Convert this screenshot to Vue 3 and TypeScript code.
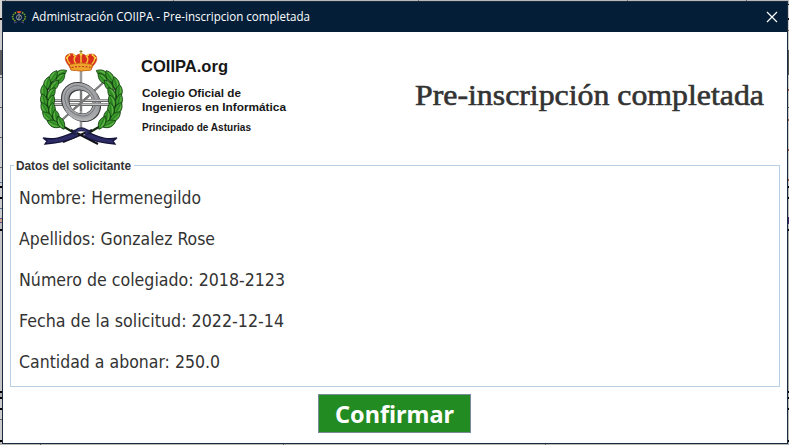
<script setup lang="ts">
interface Field {
  label: string
  value: string
  width: number
}

interface Leaf {
  x: number
  y: number
  angle: number
}

const fields: Field[] = [
  { label: 'Nombre', value: 'Hermenegildo', width: 182 },
  { label: 'Apellidos', value: 'Gonzalez Rose', width: 196 },
  { label: 'Número de colegiado', value: '2018-2123', width: 266 },
  { label: 'Fecha de la solicitud', value: '2022-12-14', width: 265 },
  { label: 'Cantidad a abonar', value: '250.0', width: 201 },
]

const leaves: Leaf[] = [
  { x: 30, y: 34, angle: 62 },
  { x: 23, y: 37, angle: 32 },
  { x: 30, y: 39, angle: 40 },
  { x: 17, y: 44, angle: 14 },
  { x: 24, y: 46, angle: 38 },
  { x: 14, y: 52, angle: -4 },
  { x: 21, y: 54, angle: 30 },
  { x: 14, y: 61, angle: -14 },
  { x: 21, y: 62, angle: 18 },
  { x: 15, y: 69, angle: -28 },
  { x: 22, y: 70, angle: 6 },
  { x: 18, y: 77, angle: -46 },
  { x: 26, y: 77, angle: -8 },
  { x: 24, y: 84, angle: -64 },
  { x: 31, y: 83, angle: -26 },
]
</script>

<template>
  <div class="desktop">
    <section class="window">
      <header class="titlebar">
        <svg class="app-icon" viewBox="0 0 14 14">
          <path d="M4 2.5C-.5 5-.5 9 4 11.5M10 2.5c4.500 2.500 4.500 6.500 0 9" fill="none" stroke="#84a52c" stroke-width="1.600" stroke-dasharray="1.500 .9" />
          <circle cx="7" cy="7.300" r="2.600" fill="none" stroke="#99979f" stroke-width=".9" />
          <path d="M7 3v8M5 10l4-5" stroke="#aaa" stroke-width=".6" />
          <path d="M4.500 1.300h5L8.500 3h-3z" fill="#e9532c" />
          <path d="m2 13 3-1M9 12l3 1" fill="none" stroke="#5b4185" />
        </svg>
        <svg class="window-title" width="284" height="22">
          <text x="0" y="15" textLength="278" lengthAdjust="spacingAndGlyphs">Administración COIIPA - Pre-inscripcion completada</text>
        </svg>
        <button class="close" aria-label="Cerrar">
          <svg width="12" height="12" viewBox="0 0 12 12"><path d="m1 1 10 10M11 1 1 11" stroke="#fff" stroke-width="1.15" /></svg>
        </button>
      </header>

      <div class="heading">
        <div class="brand">
          <svg class="crest" width="110" height="115" viewBox="0 0 110 115">
            <defs>
              <linearGradient id="steel" x1="0" y1="0" x2="1" y2="1">
                <stop offset="0" stop-color="#a4a6a8" />
                <stop offset=".45" stop-color="#8b8d90" />
                <stop offset="1" stop-color="#bcbec0" />
              </linearGradient>
              <g id="branch">
                <path d="M34 32C8 45 12 76 36 88L46 94" fill="none" stroke="#142c10" stroke-width="2.200" />
                <g v-for="(leaf, i) in leaves" :key="i" :transform="`translate(${leaf.x} ${leaf.y}) rotate(${leaf.angle})`">
                  <path d="M0-7.500C4.200-3 4.600 2 0 7-4.600 2-4.200-3 0-7.500Z" fill="#3a9a2c" stroke="#12400f" stroke-width=".8" />
                  <path d="M-1-4.500C-2.300-1-1.800 2-.5 4" fill="none" stroke="#69b94a" stroke-width=".9" />
                  <path d="M.3-5v9" stroke="#1c5c18" stroke-width=".5" />
                </g>
              </g>
            </defs>
            <path d="M51 30v60" stroke="#777" stroke-width="2.400" />
            <path d="M51 30v60" stroke="#c0c0c0" stroke-width="1" />
            <path d="m32 80 43-39" stroke="#555" stroke-width="2" />
            <path d="m32 80 43-39" stroke="#b5b5b5" stroke-width=".8" />
            <path d="M22 60.500h60M22 64.500h60" stroke="#666" stroke-width="3" />
            <path d="M22 60.300h60M22 64.300h60" stroke="#c4c4c4" stroke-width="1.600" />
            <ellipse cx="52" cy="63" rx="17" ry="14.500" transform="rotate(45 52 63)" fill="none" stroke="#3a3a3c" stroke-width="6.600" />
            <ellipse cx="50" cy="61" rx="17" ry="14.500" transform="rotate(45 50 61)" fill="none" stroke="#3a3a3c" stroke-width="6.600" />
            <ellipse cx="51.200" cy="62.200" rx="17" ry="14.500" transform="rotate(45 51.200 62.200)" fill="none" stroke="url(#steel)" stroke-width="6.200" />
            <ellipse cx="50" cy="60.800" rx="16.800" ry="14.200" transform="rotate(45 50 60.800)" fill="none" stroke="#a3a5a8" stroke-width="4.600" />
            <ellipse cx="50" cy="60.800" rx="16.500" ry="13.900" transform="rotate(45 50 60.800)" fill="none" stroke="#626266" stroke-width=".7" />
            <path d="M49 60.500h33M40 64.500h42" stroke="#666" stroke-width="2.800" />
            <path d="M49 60.300h33M40 64.300h42" stroke="#c4c4c4" stroke-width="1.500" />
            <path d="m44 69 15-13M51 51v20" stroke="#777" stroke-width="1.800" />
            <use href="#branch" />
            <use href="#branch" transform="matrix(-1 0 0 1 103 0)" />
            <path d="M62 90 33 102M41 90l27 14" fill="none" stroke="#101016" stroke-width="2" />
            <path d="M46 92c-9 2-17 9-33 6l4 3-2 3c14-1 24-3 33-8M56 92c9 2 16 9 31 6l-4 3 2 3c-13-1-23-3-31-8" fill="#2d2c66" stroke="#15153c" stroke-width="1.300" />
            <path d="M45 95c-1-8 13-9 13 0M43 92c5-3 12-3 17 0" fill="none" stroke="#20214c" stroke-width="2.800" />
            <path d="M46 93c2-5 9-5 11 0" fill="none" stroke="#4e5099" stroke-width=".8" />
            <path d="M39 26c-6-7-4-11 0-12 3-1 6 0 7 2 2-3 8-3 10 0 2-2 6-3 9-1 4 3 1 8-2 11l-2 4q-10 2-20 0Z" fill="#d8301d" stroke="#c65b16" stroke-width=".5" />
            <path d="M40 24c-4-5-3-8-1-8M46 24c-3-4-2-7 0-8M51 15v10M56 24c3-4 2-7 0-8M62 24c4-5 3-8 1-8" fill="none" stroke="#f9c738" stroke-width="1.400" />
            <path d="M39.500 24.500q11.500-3 23 0L61 30q-10 2-20 0Z" fill="#efa52a" stroke="#bd6014" stroke-width=".6" />
            <path d="M41.500 27.500q10-2 19 0" fill="none" stroke="#c53b20" stroke-width="1.200" stroke-dasharray="2 1.500" />
            <g fill="#ffe04a">
              <circle cx="37" cy="18" r="1" /><circle cx="39.500" cy="15" r="1" /><circle cx="44" cy="15" r="1" /><circle cx="51" cy="14" r="1.500" /><circle cx="58" cy="15" r="1" /><circle cx="62.500" cy="15" r="1" /><circle cx="65.500" cy="18" r="1" />
            </g>
            <path d="M51 10v4m-1.500-2.500h3" stroke="#8d7a28" />
          </svg>
          <svg class="brand-name" width="155" height="100">
            <text class="org" x="1" y="27" textLength="87" lengthAdjust="spacingAndGlyphs">COIIPA.org</text>
            <text class="college" x="2" y="52" textLength="99" lengthAdjust="spacingAndGlyphs">Colegio Oficial de</text>
            <text class="college" x="2" y="66" textLength="144" lengthAdjust="spacingAndGlyphs">Ingenieros en Informática</text>
            <text class="region" x="2" y="86" textLength="109" lengthAdjust="spacingAndGlyphs">Principado de Asturias</text>
          </svg>
        </div>
        <svg class="page-title" width="352" height="46">
          <text x="1" y="31" textLength="349" lengthAdjust="spacingAndGlyphs">Pre-inscripción completada</text>
        </svg>
      </div>

      <fieldset class="details">
        <legend>
          <svg width="116" height="14"><text x="0" y="12" textLength="115" lengthAdjust="spacingAndGlyphs">Datos del solicitante</text></svg>
        </legend>
        <svg v-for="field in fields" :key="field.label" class="field" width="300" height="41">
          <text x="0" y="27" :textLength="field.width" lengthAdjust="spacingAndGlyphs">{{ field.label }}: {{ field.value }}</text>
        </svg>
      </fieldset>

      <footer class="actions">
        <button class="confirm">
          <svg width="125" height="37"><text x="3" y="28" textLength="119" lengthAdjust="spacingAndGlyphs">Confirmar</text></svg>
        </button>
      </footer>
    </section>
  </div>
</template>

<style>
body {
  margin: 0;
  overflow: hidden;
}
</style>

<style scoped>
* {
  box-sizing: border-box;
}

svg {
  display: block;
  flex: none;
  overflow: visible;
}

.desktop {
  width: 789px;
  height: 445px;
  padding: 1px 1px 1px 2px;
  background:
    linear-gradient(90deg, transparent 5px, #777 5px 6px, transparent 6px 173px, #777 173px 174px, transparent 174px 418px, #777 418px 419px, transparent 419px 627px, #777 627px 628px, transparent 628px 746px, #5b6878 746px 747px, transparent 747px) 0 0 / 100% 1px no-repeat,
    linear-gradient(90deg, transparent 40px, #666 40px 41px, transparent 41px 283px, #666 283px 284px, transparent 284px 545px, #666 545px 546px, transparent 546px) 0 444px / 100% 1px no-repeat,
    linear-gradient(#d4d4d2 18px, #000 18px 20px, #ccc 20px 50px, #5d5d5d 50px 75px, #ccc 75px 77px, #666 77px 78px, #ccc 78px 107px, #666 107px 108px, #ccc 108px 137px, #666 137px 138px, #ccc 138px 167px, #666 167px 168px, #ccc 168px 182px, #68799b 182px 183px, #ccc 183px 186px, #000 186px 188px, #ccc 188px 197px, #000 197px 199px, #ccc 199px 208px, #596a8d 208px 209px, #ccc 209px 218px, #63518a 218px 219px, #d0a58e 219px 222px, #63518a 222px 223px, #bbb 223px 229px, #000 229px 231px, #c5c5c5 231px 391px, #000 391px 393px, #aaa 393px 397px, #000 397px 399px, #ccc 399px 408px, #000 408px 410px, #ccc 410px 419px, #666 419px 420px, #ccc 420px 440px, #000 440px 442px, #b3b3b3 442px) 0 0 / 2px 100% no-repeat,
    linear-gradient(#bbb 4px, #111 4px 5px, #ccc 5px 18px, #000 18px 20px, #ccc 20px 30px, #9b5132 30px 31px, #ccc 31px 50px, #555 50px 75px, #ccc 75px 89px, #9b5132 89px 91px, #ccc 91px 107px, #555 107px 108px, #ccc 108px 119px, #9b5132 119px 121px, #ccc 121px 149px, #9b5132 149px 151px, #ccc 151px 179px, #9b5132 179px 181px, #ccc 181px 186px, #000 186px 188px, #bbb 188px 197px, #000 197px 199px, #bbb 199px 217px, #3e2565 217px 224px, #bbb 224px 229px, #000 229px 231px, #aaa 231px 391px, #000 391px 393px, #bbb 393px 397px, #000 397px 399px, #bbb 399px 408px, #000 408px 410px, #bbb 410px 440px, #000 440px 442px, #aaa 442px) 788px 0 / 1px 100% no-repeat,
    #b9b9b7;
}

.window {
  width: 786px;
  height: 443px;
  display: flex;
  flex-direction: column;
  background: #fff;
  border: 1px solid #182b40;
}

.titlebar {
  height: 30px;
  flex: none;
  display: flex;
  align-items: center;
  padding: 0 9px;
  background: #041e38;
}

.app-icon {
  width: 14px;
  height: 14px;
}

.window-title {
  margin-left: 6px;
  fill: #fff;
  font: 12px "Open Sans", "Noto Sans", sans-serif;
}

.close {
  margin-left: auto;
  padding: 0;
  border: 0;
  background: none;
}

.heading {
  height: 125px;
  flex: none;
  display: flex;
  justify-content: space-between;
  padding: 8px 21px 0 27px;
}

.brand {
  display: flex;
}

.brand-name {
  margin-top: 5px;
  font-family: "Liberation Sans", Arial, sans-serif;
  font-weight: bold;
  fill: #171717;
}

.org {
  font-size: 16.5px;
}

.college {
  font-size: 11.5px;
}

.region {
  font-size: 10px;
}

.page-title {
  margin-top: 34px;
  fill: #333;
  stroke: #333;
  stroke-width: 0.6px;
  font: 30px "Liberation Serif", serif;
}

.details {
  width: 770px;
  height: 229px;
  margin: 1px 0 0 7px;
  padding: 5px 8px 0;
  border: 1px solid #b8cfe5;
}

.details legend {
  padding: 0 2px;
  margin-left: -5px;
  fill: #333;
  font: bold 12px "Liberation Sans", Arial, sans-serif;
}

.field {
  fill: #333;
  font: 18px "DejaVu Sans Condensed", "DejaVu Sans", sans-serif;
}

.actions {
  display: flex;
  justify-content: center;
  padding: 7px 2px 0 0;
}

.confirm {
  width: 153px;
  height: 39px;
  display: flex;
  align-items: center;
  justify-content: center;
  padding: 0;
  border: 1px solid #7a8a99;
  background: #228b22;
}

.confirm text {
  fill: #fff;
  font: bold 24px "Noto Sans", "Open Sans", sans-serif;
}
</style>
